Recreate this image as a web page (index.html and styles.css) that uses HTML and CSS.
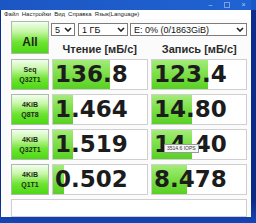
FILE: index.html
```html
<!DOCTYPE html>
<html>
<head>
<meta charset="utf-8">
<link rel="stylesheet" href="styles.css">
</head>
<body>
<div class="desk">
  <div class="win">
    <div class="title">
      <span class="ctl">&#8211;</span><span class="ctl sq"></span><span class="ctl">&#215;</span>
    </div>
    <div class="menu">
      <span>Файл</span><span>Настройки</span><span>Вид</span><span>Справка</span><span>Язык(Language)</span>
    </div>
    <div class="client">
      <div class="grid">
        <div class="btn all">All</div>
        <div class="topright">
          <div class="selects">
            <div class="sel s1"><span>5</span><svg class="chev" viewBox="0 0 8 5"><polyline points="1,1 4,4 7,1"/></svg></div>
            <div class="sel s2"><span>1 ГБ</span><svg class="chev" viewBox="0 0 8 5"><polyline points="1,1 4,4 7,1"/></svg></div>
            <div class="sel s3"><span>E: 0% (0/1863GiB)</span><svg class="chev" viewBox="0 0 8 5"><polyline points="1,1 4,4 7,1"/></svg></div>
          </div>
          <div class="heads"><span>Чтение [мБ/с]</span><span>Запись [мБ/с]</span></div>
        </div>

        <div class="btn test">Seq<br>Q32T1</div>
        <div class="cell"><div class="bar" style="width:61%"></div><span class="val">136.8</span></div>
        <div class="cell"><div class="bar" style="width:60%"></div><span class="val">123.4</span></div>

        <div class="btn test">4KiB<br>Q8T8</div>
        <div class="cell"><div class="bar" style="width:21%"></div><span class="val">1.464</span></div>
        <div class="cell"><div class="bar" style="width:43%"></div><span class="val">14.80</span></div>

        <div class="btn test">4KiB<br>Q32T1</div>
        <div class="cell"><div class="bar" style="width:21%"></div><span class="val">1.519</span></div>
        <div class="cell"><div class="bar" style="width:43%"></div><span class="val">14.40</span><div class="tip">3514.6 IOPS</div></div>

        <div class="btn test">4KiB<br>Q1T1</div>
        <div class="cell"><div class="bar" style="width:12%"></div><span class="val">0.502</span></div>
        <div class="cell"><div class="bar" style="width:37%"></div><span class="val">8.478</span></div>
      </div>
      <div class="comment"></div>
    </div>
  </div>
</div>
</body>
</html>
```

FILE: styles.css
```css
html, body {
  margin: 0;
  padding: 0;
}
body {
  width: 256px;
  height: 223px;
  overflow: hidden;
  background: #0c2f93;
  font-family: "Liberation Sans", Arial, sans-serif;
}
.desk {
  width: 256px;
  height: 223px;
  background: linear-gradient(180deg, #1a58c8 0px, #1a58c8 10px, #0b2d8e 10px, #0a2a86 200px, #1646b8 223px);
}
.win {
  margin-left: 1px;
  width: 250px;
  height: 217px;
  background: #fbfbfb;
  display: flex;
  flex-direction: column;
}
.title {
  height: 10px;
  background: linear-gradient(90deg, #1c56c4, #2063d2);
  display: flex;
  justify-content: flex-end;
  align-items: center;
  gap: 9px;
  padding-right: 4px;
  color: #b8cdf0;
  font-size: 7px;
  line-height: 1;
}
.ctl {
  width: 7px;
  text-align: center;
}
.ctl.sq {
  width: 4px;
  height: 4px;
  border: 1px solid #7d9ee0;
  margin: 0 1px;
}
.menu {
  height: 10px;
  background: #ffffff;
  display: flex;
  align-items: center;
  gap: 3px;
  padding-left: 3px;
  font-size: 6px;
  color: #222;
}
.client {
  flex: 1;
  padding: 2px 0 0 10px;
  display: flex;
  flex-direction: column;
}
.grid {
  display: grid;
  grid-template-columns: 38px 96px 96px;
  grid-template-rows: 34px 31px 31px 31px 31px;
  column-gap: 3px;
  row-gap: 4px;
}
.btn {
  box-sizing: border-box;
  border: 1px solid #b0b8ad;
  background: linear-gradient(180deg, #f2fef0 0%, #c8f6a8 30%, #6ee432 65%, #4cd814 100%);
  display: flex;
  align-items: center;
  justify-content: center;
  text-align: center;
  font-weight: bold;
  color: #1b2a16;
}
.btn.all {
  font-size: 12px;
  padding-top: 8px;
  margin-bottom: 1px;
}
.btn.test {
  font-size: 7px;
  line-height: 10px;
}
.topright {
  grid-column: 2 / 4;
  display: flex;
  flex-direction: column;
}
.selects {
  display: flex;
  gap: 3px;
  margin-top: 2px;
  margin-left: -1px;
}
.sel {
  box-sizing: border-box;
  height: 13px;
  border: 1px solid #7c7c7c;
  background: #fff;
  display: flex;
  align-items: center;
  justify-content: space-between;
  padding: 0 2px 0 3px;
  font-size: 9px;
  color: #111;
}
.s1 { width: 24px; }
.s2 { width: 50px; }
.s3 { width: 117px; margin-left: -1px; }
.chev {
  width: 8px;
  height: 5px;
}
.chev polyline {
  fill: none;
  stroke: #222;
  stroke-width: 1.6;
}
.heads {
  display: flex;
  margin-top: 7px;
  font-size: 11px;
  font-weight: bold;
  color: #2a2a2a;
}
.heads span {
  flex: 1;
  text-align: center;
}
.heads span:first-child {
  padding-right: 4px;
}
.cell {
  position: relative;
  box-sizing: border-box;
  border: 1px solid #cfcfcf;
  background: #fff;
  display: flex;
  align-items: center;
}
.bar {
  position: absolute;
  left: 0;
  top: 0;
  bottom: 0;
  background: linear-gradient(180deg, #a4ec7a 0%, #7ee04a 45%, #58d024 100%);
}
.val {
  position: relative;
  padding-left: 2px;
  font-family: "DejaVu Sans", sans-serif;
  font-weight: bold;
  font-size: 23px;
  letter-spacing: 0;
  line-height: 1;
  color: #1c1c1c;
}
.tip {
  position: absolute;
  left: 12px;
  top: 14px;
  padding: 0 2px;
  height: 7px;
  line-height: 7px;
  font-size: 5px;
  background: #f7f7f7;
  border: 1px solid #9a9a9a;
  color: #333;
  white-space: nowrap;
}
.comment {
  box-sizing: border-box;
  margin-top: 4px;
  width: 236px;
  height: 18px;
  border: 1px solid #cfcfcf;
  background: #fff;
}
```
